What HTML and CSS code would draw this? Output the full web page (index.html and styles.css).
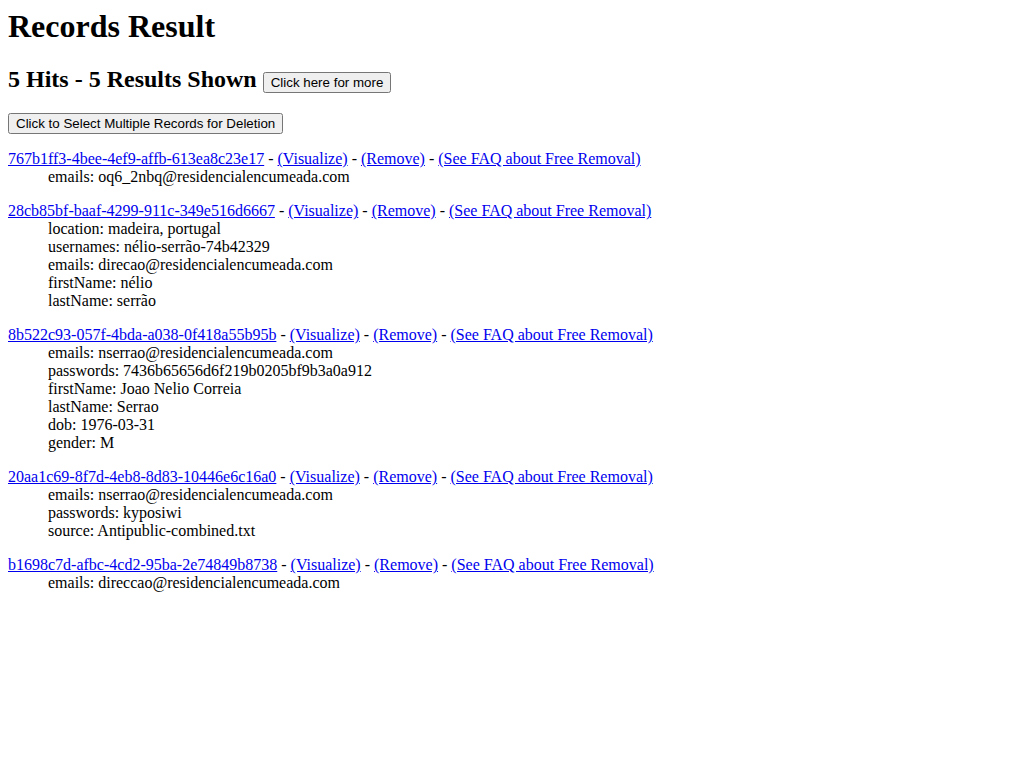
FILE: index.html
```html
<!DOCTYPE html>
<html>
<head>
<meta charset="utf-8">
<title>Records Result</title>
<link rel="stylesheet" href="styles.css">
</head>
<body class="page">
<h1 class="title">Records Result</h1>
<h2 class="hits">5 Hits - 5 Results Shown <button class="btn">Click here for more</button></h2>
<button class="btn">Click to Select Multiple Records for Deletion</button>

<dl class="record">
<dt><a class="link" href="#">767b1ff3-4bee-4ef9-affb-613ea8c23e17</a> - <a class="link" href="#">(Visualize)</a> - <a class="link" href="#">(Remove)</a> - <a class="link" href="#">(See FAQ about Free Removal)</a></dt>
<dd>emails: oq6_2nbq@residencialencumeada.com</dd>
</dl>

<dl class="record">
<dt><a class="link" href="#">28cb85bf-baaf-4299-911c-349e516d6667</a> - <a class="link" href="#">(Visualize)</a> - <a class="link" href="#">(Remove)</a> - <a class="link" href="#">(See FAQ about Free Removal)</a></dt>
<dd>location: madeira, portugal</dd>
<dd>usernames: nélio-serrão-74b42329</dd>
<dd>emails: direcao@residencialencumeada.com</dd>
<dd>firstName: nélio</dd>
<dd>lastName: serrão</dd>
</dl>

<dl class="record">
<dt><a class="link" href="#">8b522c93-057f-4bda-a038-0f418a55b95b</a> - <a class="link" href="#">(Visualize)</a> - <a class="link" href="#">(Remove)</a> - <a class="link" href="#">(See FAQ about Free Removal)</a></dt>
<dd>emails: nserrao@residencialencumeada.com</dd>
<dd>passwords: 7436b65656d6f219b0205bf9b3a0a912</dd>
<dd>firstName: Joao Nelio Correia</dd>
<dd>lastName: Serrao</dd>
<dd>dob: 1976-03-31</dd>
<dd>gender: M</dd>
</dl>

<dl class="record">
<dt><a class="link" href="#">20aa1c69-8f7d-4eb8-8d83-10446e6c16a0</a> - <a class="link" href="#">(Visualize)</a> - <a class="link" href="#">(Remove)</a> - <a class="link" href="#">(See FAQ about Free Removal)</a></dt>
<dd>emails: nserrao@residencialencumeada.com</dd>
<dd>passwords: kyposiwi</dd>
<dd>source: Antipublic-combined.txt</dd>
</dl>

<dl class="record">
<dt><a class="link" href="#">b1698c7d-afbc-4cd2-95ba-2e74849b8738</a> - <a class="link" href="#">(Visualize)</a> - <a class="link" href="#">(Remove)</a> - <a class="link" href="#">(See FAQ about Free Removal)</a></dt>
<dd>emails: direccao@residencialencumeada.com</dd>
</dl>
</body>
</html>
```
FILE: styles.css
```css
.page {
  margin: 8px;
  font-family: "Liberation Serif", "Times New Roman", serif;
  font-size: 16px;
  color: #000;
  background: #fff;
}
.title {
  font-size: 32px;
  font-weight: bold;
  margin: 0 0 21.44px;
}
.hits {
  font-size: 24px;
  font-weight: bold;
  margin: 19.92px 0;
}
.btn {
  font-family: "Liberation Sans", Arial, sans-serif;
  font-size: 13.333px;
  padding: 1px 6px;
  vertical-align: baseline;
}
.record {
  margin: 16px 0;
}
.record dt {
  margin: 0;
}
.record dd {
  margin: 0 0 0 40px;
}
.link {
  color: #0000ee;
  text-decoration: underline;
}
```
